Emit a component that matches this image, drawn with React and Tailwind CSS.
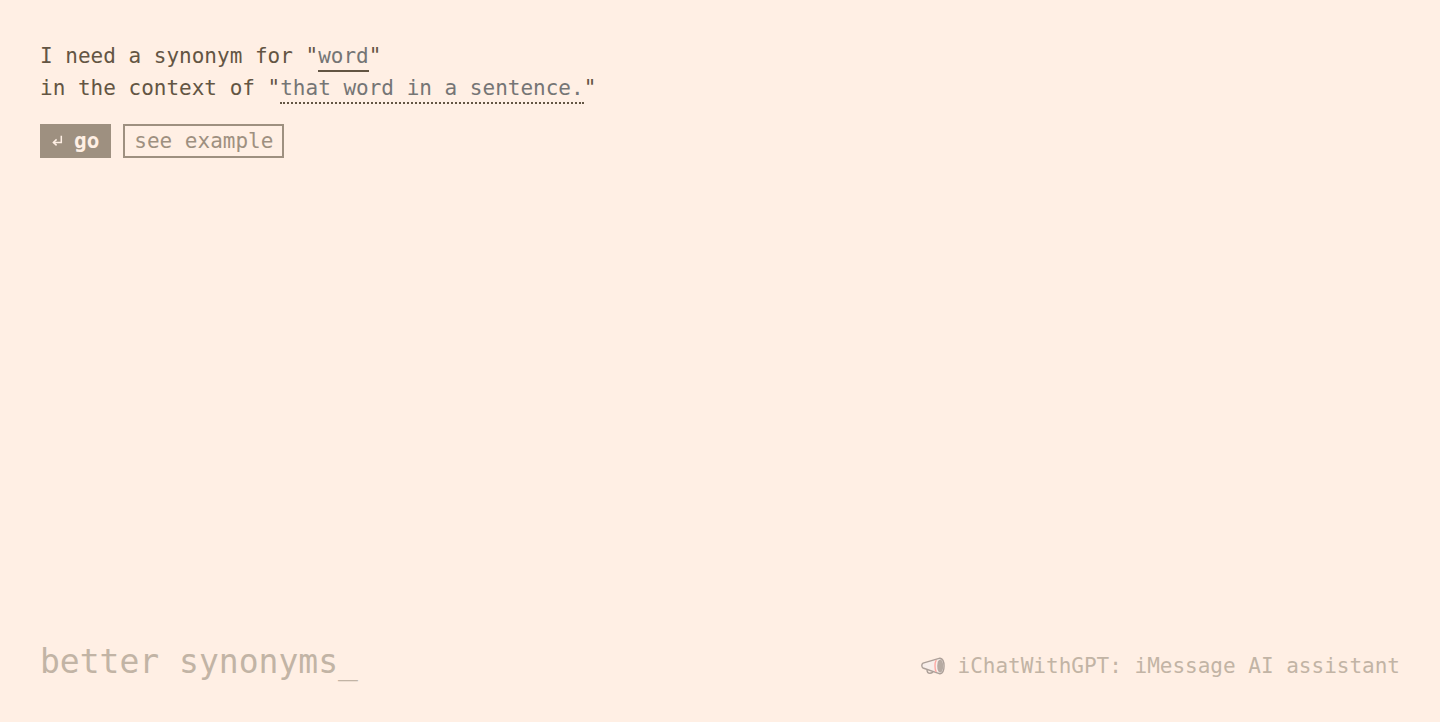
import React, { useState } from "react";

const EXAMPLE = {
    word: "good",
    context: "a good cup of coffee.",
};

const ReturnIcon = () => (
    <svg
        viewBox="0 0 12 12"
        className="w-3 h-3"
        fill="none"
        stroke="currentColor"
        strokeWidth="1.5"
        aria-hidden="true"
    >
        <path d="M9.3 0.8V7.4H1.6" />
        <path d="M4.6 4.4L1.4 7.4L4.6 10.4" />
    </svg>
);

const Megaphone = () => (
    <svg viewBox="0 0 24 18" className="w-6 h-[18px]" fill="none" aria-hidden="true">
        <path d="M6 12.4C6 15 7.4 16.2 9 16.2C10.6 16.2 11.8 15.4 12 14.2" stroke="#5c5350" strokeWidth="1.4" />
        <path
            d="M19 1.2L2 6.2C.4 7 .4 10.2 2 11L19 16.8C24.4 16 24.4 2 19 1.2Z"
            fill="#f3eef0"
            stroke="#5c5350"
            strokeWidth="1.4"
            strokeLinejoin="round"
        />
        <path d="M15.2 3C13.6 6 13.6 12 15.2 15" stroke="#ff6464" strokeWidth="1.4" />
        <ellipse cx="19.2" cy="9" rx="3" ry="6.6" fill="#6f6763" />
    </svg>
);

const App = () => {
    const [word, setWord] = useState("");
    const [context, setContext] = useState("");

    const handleSubmit = (e) => {
        e.preventDefault();
    };

    const showExample = () => {
        setWord(EXAMPLE.word);
        setContext(EXAMPLE.context);
    };

    return (
        <div className="min-h-screen flex flex-col justify-between p-10 bg-[#ffefe4] text-[#635543] font-['DejaVu_Sans_Mono',monospace] text-[21px] leading-8">
            <form onSubmit={handleSubmit}>
                <div className="flex flex-wrap">
                    <label htmlFor="word" className="whitespace-pre">
                        I need a synonym for "
                    </label>
                    <input
                        id="word"
                        type="text"
                        placeholder="word"
                        value={word}
                        onChange={(e) => setWord(e.target.value)}
                        className="w-[4ch] h-8 pt-0.5 border-b-2 border-[#635543] outline-none placeholder:text-[#757575]"
                    />
                    <span>"</span>
                </div>
                <div className="flex flex-wrap">
                    <label htmlFor="context" className="whitespace-pre">
                        in the context of "
                    </label>
                    <input
                        id="context"
                        type="text"
                        placeholder="that word in a sentence."
                        value={context}
                        onChange={(e) => setContext(e.target.value)}
                        className="w-[24ch] h-8 pt-0.5 border-b-2 border-dotted border-[#635543] outline-none placeholder:text-[#757575]"
                    />
                    <span>"</span>
                </div>
                <div className="flex gap-3 mt-5">
                    <button
                        type="submit"
                        className="flex items-center gap-[10px] h-[34px] px-3 bg-[#9e9080] text-[#ffefe4] font-bold"
                    >
                        <ReturnIcon />
                        go
                    </button>
                    <button
                        type="button"
                        onClick={showExample}
                        className="flex items-center h-[34px] px-[9px] border-2 border-[#9e9080] text-[#9e9080]"
                    >
                        see example
                    </button>
                </div>
            </form>
            <footer className="flex flex-wrap items-end justify-between text-[#c2b4a5]">
                <h1 className="text-[33px] leading-10">better synonyms_</h1>
                <a href="#ichatwithgpt" className="flex items-center gap-3">
                    <span className="opacity-50">
                        <Megaphone />
                    </span>
                    iChatWithGPT: iMessage AI assistant
                </a>
            </footer>
        </div>
    );
};

export default App;
